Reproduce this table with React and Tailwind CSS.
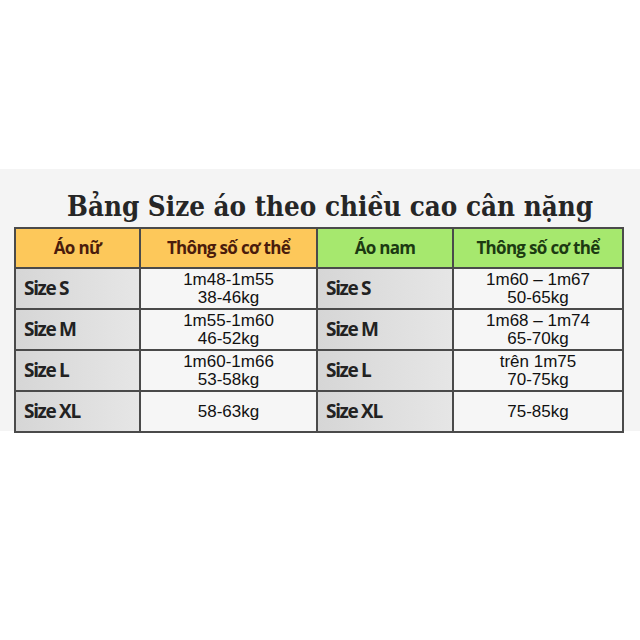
import React from "react";

const rows = [
  { size: "Size S", f: ["1m48-1m55", "38-46kg"], m: ["1m60 – 1m67", "50-65kg"] },
  { size: "Size M", f: ["1m55-1m60", "46-52kg"], m: ["1m68 – 1m74", "65-70kg"] },
  { size: "Size L", f: ["1m60-1m66", "53-58kg"], m: ["trên 1m75", "70-75kg"] },
  { size: "Size XL", f: ["58-63kg"], m: ["75-85kg"] },
];

const label = "px-2 text-left text-[19px] font-bold tracking-[-0.07em] text-[#222] border-2 border-[#4a4a4a] bg-gradient-to-r from-[#d6d6d6] to-[#e6e6e6]";
const data = "text-center text-[17px] leading-[18px] text-[#111] border-2 border-[#4a4a4a] bg-[#f6f6f6]";

function Cell({ lines }) {
  return (
    <td className={data} style={{ fontFamily: '"Liberation Sans", Arial, sans-serif' }}>
      {lines.map((l, i) => (
        <div key={i}>{l}</div>
      ))}
    </td>
  );
}

export default function App() {
  return (
    <div className="w-[640px] h-[640px] bg-white overflow-hidden">
      <div className="mt-[169px] h-[262px] bg-[#f4f4f4] flex flex-col items-center">
        <h1
          className="mt-[19px] ml-[20px] text-[27.5px] leading-[36px] font-bold text-[#262626]"
          style={{ fontFamily: '"DejaVu Serif Condensed", "DejaVu Serif", serif', fontStretch: "condensed" }}
        >
          Bảng Size áo theo chiều cao cân nặng
        </h1>
        <table
          className="mt-[3px] border-collapse ml-[-2px]"
          style={{ fontFamily: '"Open Sans", "Liberation Sans", sans-serif' }}
        >
          <thead>
            <tr className="h-[40px] text-[17px] font-bold">
              <th className="w-[125px] border-2 border-[#4a4a4a] bg-[#fdc85a] text-[#4a1c0c] tracking-[-0.04em]">Áo nữ</th>
              <th className="w-[177px] border-2 border-[#4a4a4a] bg-[#fdc85a] text-[#4a1c0c] tracking-[-0.04em]">Thông số cơ thể</th>
              <th className="w-[136px] border-2 border-[#4a4a4a] bg-[#a6e86e] text-[#1c3a12] tracking-[-0.04em]">Áo nam</th>
              <th className="w-[170px] border-2 border-[#4a4a4a] bg-[#a6e86e] text-[#1c3a12] tracking-[-0.04em]">Thông số cơ thể</th>
            </tr>
          </thead>
          <tbody>
            {rows.map((r) => (
              <tr key={r.size} className="h-[41px]">
                <td className={label}>{r.size}</td>
                <Cell lines={r.f} />
                <td className={label}>{r.size}</td>
                <Cell lines={r.m} />
              </tr>
            ))}
          </tbody>
        </table>
      </div>
    </div>
  );
}
